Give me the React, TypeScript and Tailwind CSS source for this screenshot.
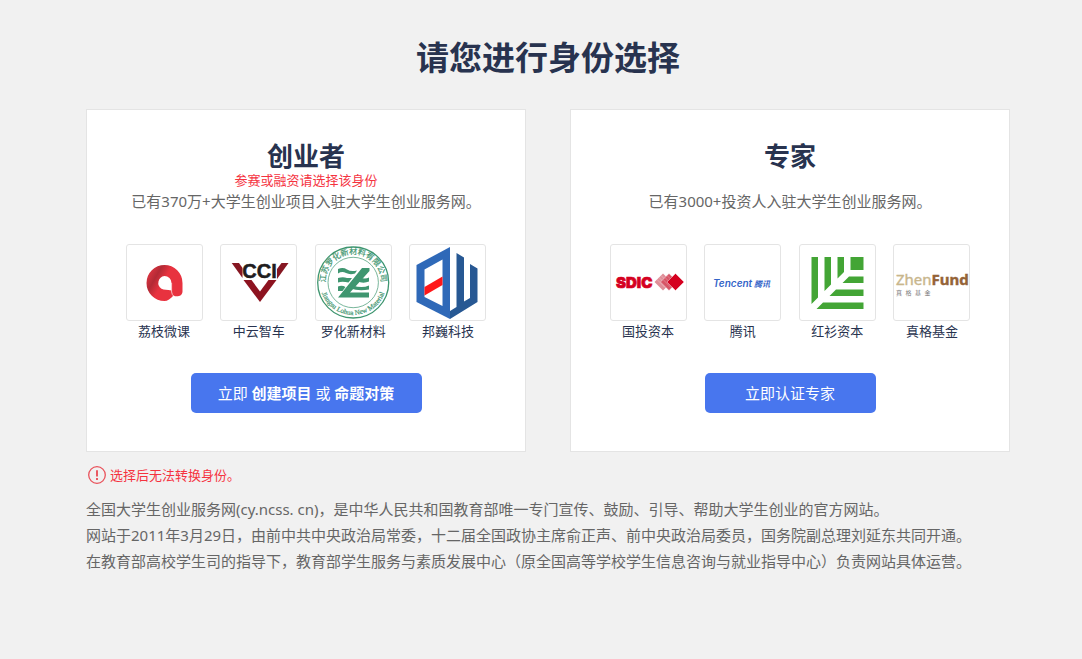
import React from 'react';

const green = '#3f9670';

function LizhiLogo() {
  return (
    <svg viewBox="0 0 75 75" className="size-full" aria-hidden="true">
      <defs>
        <linearGradient id="lizhi" x1="0" y1="0.3" x2="0.7" y2="0.7">
          <stop offset="0" stopColor="#dc3440" />
          <stop offset="0.3" stopColor="#b32a35" />
          <stop offset="0.6" stopColor="#e8323f" />
        </linearGradient>
      </defs>
      <path d="M37.5 20A18 18 0 0 1 55.500 38V46.500C55.500 51 50 52.500 46.500 50.500C43.500 54 40.500 56 37.500 56A18 18 0 0 1 37.500 20Z" fill="url(#lizhi)" />
      <path d="M37.500 31A7 7 0 0 1 44.500 38V45.500C40 44.500 37 45 34.500 43.800A7 7 0 0 1 37.500 31Z" fill="#fff" />
      <path d="M44.600 38V47Q45 50 47 51.500" fill="none" stroke="#fbd5d8" strokeWidth="0.800" />
    </svg>
  );
}

function CciLogo() {
  return (
    <svg viewBox="0 0 75 75" className="size-full" aria-hidden="true">
      <path d="M10.700 18H18L21.500 23V33Z" fill="#861722" />
      <path d="M60.500 18H67.500L56 34V24Z" fill="#861722" />
      <path d="M22.500 35H55.500L39 57Z" fill="#8d1320" />
      <path d="M30.500 35H47.500L39 46.500Z" fill="#fff" />
      <text x="38.500" y="33" textAnchor="middle" fontFamily="Liberation Sans, sans-serif" fontWeight="700" fontSize="20" fill="#211d1e" stroke="#211d1e" strokeWidth="0.500">CCI</text>
    </svg>
  );
}

function LuohuaLogo() {
  return (
    <svg viewBox="0 0 75 75" className="size-full" aria-hidden="true">
      <defs>
        <path id="arc-top" d="M11.200 46.500A27.700 27.700 0 1 1 63.200 46.500" />
        <path id="arc-bottom" d="M4.500 43A33.300 33.300 0 0 0 69.900 43" />
      </defs>
      <circle cx="37.200" cy="37.500" r="35.500" fill="none" stroke={green} strokeWidth="1.300" />
      <circle cx="37.200" cy="37.500" r="25.200" fill="none" stroke={green} strokeWidth="0.700" />
      <text fontFamily="Noto Sans CJK SC, sans-serif" fontSize="8" fill={green} stroke={green} strokeWidth="0.200">
        <textPath href="#arc-top" startOffset="50%" textAnchor="middle">江苏罗化新材料有限公司</textPath>
      </text>
      <text fontFamily="Liberation Serif, serif" fontSize="7" fill={green} stroke={green} strokeWidth="0.200">
        <textPath href="#arc-bottom" startOffset="50%" textAnchor="middle">Jiangsu Lohua New Material</textPath>
      </text>
      <path d="M46 23H53.500V26L34 47.500H53V52.500H22Z" fill={green} />
      <path d="M22 24Q27 22 31 24.500T41 25.500L39 28.500Q34 30 30 28T22 28.500ZM22 33Q27 31.500 31 33H36L32.500 37.500Q26 36 22 37.500ZM22 41.500Q26 40 29.500 42L26.500 46H22ZM44 32.500Q49 34.500 53 32.500V36.500Q47 39 41 36ZM37 40.500Q46 43.500 53 40.500V44.500Q43 46.500 34.500 43.500Z" fill={green} />
    </svg>
  );
}

function BangweiLogo() {
  return (
    <svg viewBox="0 0 75 75" className="size-full" aria-hidden="true">
      <path d="M6.500 20L40 2V74L6.500 57Z" fill="#2f69b8" />
      <path d="M14.500 24.500L32.500 14.500V61L14.500 52Z" fill="#fff" />
      <path d="M14.500 42L32.500 31.500V40L14.500 50.500Z" fill="#ff1719" />
      <path d="M46.500 8L54 12.500V56.500L60 53V19L67.500 23.500V57L40 74V66L46.500 62Z" fill="#275893" />
    </svg>
  );
}

function SdicLogo() {
  return (
    <svg viewBox="0 0 75 75" className="size-full" aria-hidden="true">
      <text x="5" y="43" fontFamily="Inter, sans-serif" fontWeight="900" fontSize="15" fill="#d5001f" stroke="#d5001f" strokeWidth="0.700">SDIC</text>
      <path d="M52 28.500L60.500 37L52 45.500L43.500 37Z" fill="#df8e98" />
      <path d="M46 34.500L54 42.500M48 32.500L56 40.500M50 30.500L58 38.500" stroke="#f3cbd0" strokeWidth="0.500" />
      <path d="M58 28.500L66.500 37L58 45.500L49.500 37Z" fill="#d75566" stroke="#fff" strokeWidth="0.400" />
      <path d="M52 34.500L60 42.500M54 32.500L62 40.500M56 30.500L64 38.500" stroke="#eba5ae" strokeWidth="0.500" />
      <path d="M64.500 28.500L73 37L64.500 45.500L56 37Z" fill="#d5001f" stroke="#fff" strokeWidth="0.400" />
    </svg>
  );
}

function TencentLogo() {
  return (
    <svg viewBox="0 0 75 75" className="size-full" aria-hidden="true">
      <text x="8" y="42" fontFamily="Inter, sans-serif" fontWeight="600" fontStyle="italic" fontSize="10" fill="#3464c8">Tencent</text>
      <text x="49" y="41.500" fontFamily="Noto Sans CJK SC, sans-serif" fontWeight="700" fontStyle="italic" fontSize="8" fill="#3464c8">腾讯</text>
    </svg>
  );
}

function HongshanLogo() {
  return (
    <svg viewBox="0 0 75 75" className="size-full" aria-hidden="true">
      <path
        d="M11.500 12H18V52.500L11.500 59ZM24.500 12H31V39.500L24.500 46ZM37.500 12H44V27L37.500 33.500ZM50.500 12H63.500V25H50.500ZM49 31.500H63.500V38H42.500ZM36 44.500H63.500V51H29.500ZM23 57.500H63.500V64H16.500Z"
        fill="#43a535"
      />
    </svg>
  );
}

function ZhenFundLogo() {
  return (
    <svg viewBox="0 0 75 75" className="size-full" aria-hidden="true">
      <text x="2" y="40" fontFamily="Noto Sans, sans-serif" fontSize="15" fill="#c8b68c" stroke="#c8b68c" strokeWidth="0.400">
        Zhen<tspan fontWeight="700" fill="#946337" stroke="#946337">Fund</tspan>
      </text>
      <text x="2 11.500 21 30.500" y="49.500" fontFamily="Noto Sans CJK SC, sans-serif" fontSize="6" fill="#777">真格基金</text>
    </svg>
  );
}

const projects = [
  { name: '荔枝微课', Logo: LizhiLogo },
  { name: '中云智车', Logo: CciLogo },
  { name: '罗化新材料', Logo: LuohuaLogo },
  { name: '邦巍科技', Logo: BangweiLogo },
];

const investors = [
  { name: '国投资本', Logo: SdicLogo },
  { name: '腾讯', Logo: TencentLogo },
  { name: '红衫资本', Logo: HongshanLogo },
  { name: '真格基金', Logo: ZhenFundLogo },
];

interface RoleCardProps {
  title: string;
  hint?: string;
  description: string;
  partners: { name: string; Logo: () => React.JSX.Element }[];
  children: React.ReactNode;
}

function RoleCard({ title, hint, description, partners, children }: RoleCardProps) {
  return (
    <section className="flex flex-col items-center border border-[#e4e4e4] bg-white pt-8 pb-[38px]">
      <h2 className="text-[26px] leading-7 font-bold text-[#28334f]">{title}</h2>
      <p className="h-5 text-[13px] leading-5 text-[#f5333f]">{hint}</p>
      <p className="text-[15px] leading-[22px] text-[#666]">{description}</p>
      <ul className="mt-8 flex w-[361px] justify-between">
        {partners.map(({ name, Logo }) => (
          <li key={name} className="w-[77px] text-center">
            <div className="size-[77px] overflow-hidden rounded-[3px] border border-[#e4e4e4]">
              <Logo />
            </div>
            <p className="text-[13px] leading-5 whitespace-nowrap text-[#28334f]">{name}</p>
          </li>
        ))}
      </ul>
      {children}
    </section>
  );
}

export default function App() {
  return (
    <div className="min-h-screen bg-[#f1f1f1] pb-20 pl-[14px] font-['Noto_Sans','Noto_Sans_CJK_SC',sans-serif]" lang="zh-CN">
      <main className="mx-auto max-w-[924px] pt-[34px]">
        <h1 className="text-center text-[33px] leading-[48px] font-bold text-[#28334f]">请您进行身份选择</h1>

        <div className="mt-[27px] grid grid-cols-2 gap-11">
          <RoleCard
            title="创业者"
            hint="参赛或融资请选择该身份"
            description="已有370万+大学生创业项目入驻大学生创业服务网。"
            partners={projects}
          >
            <button type="button" className="mt-8 h-10 w-[231px] rounded-[5px] bg-[#4876ee] text-[15px] text-white">
              立即 <b>创建项目</b> 或 <b>命题对策</b>
            </button>
          </RoleCard>
          <RoleCard
            title="专家"
            description="已有3000+投资人入驻大学生创业服务网。"
            partners={investors}
          >
            <button type="button" className="mt-8 h-10 w-[171px] rounded-[5px] bg-[#4876ee] text-[15px] text-white">
              立即认证专家
            </button>
          </RoleCard>
        </div>

        <p className="mt-3 flex items-center gap-1 pl-0.5 text-[13px] leading-[22px] text-[#f5333f]">
          <svg viewBox="0 0 18 18" className="size-[18px]" fill="none" stroke="#e9525b" aria-hidden="true">
            <circle cx="9" cy="9" r="8.300" strokeWidth="1.300" />
            <path d="M9 4.200V10.500M9 12V14" strokeWidth="1.900" />
          </svg>
          选择后无法转换身份。
        </p>

        <div className="mt-2.5 text-[15px] leading-[26px] text-[#666]">
          <p>全国大学生创业服务网(cy.ncss. cn)，是中华人民共和国教育部唯一专门宣传、鼓励、引导、帮助大学生创业的官方网站。</p>
          <p>网站于2011年3月29日，由前中共中央政治局常委，十二届全国政协主席俞正声、前中央政治局委员，国务院副总理刘延东共同开通。</p>
          <p>在教育部高校学生司的指导下，教育部学生服务与素质发展中心（原全国高等学校学生信息咨询与就业指导中心）负责网站具体运营。</p>
        </div>
      </main>
    </div>
  );
}
